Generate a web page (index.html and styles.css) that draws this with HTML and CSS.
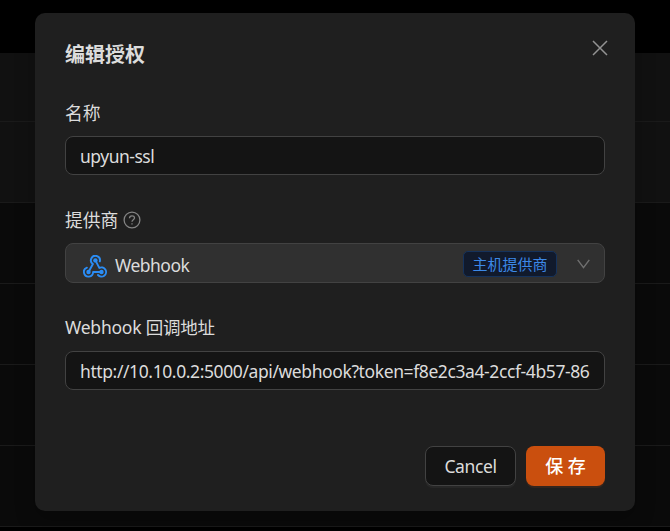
FILE: index.html
```html
<!DOCTYPE html>
<html lang="zh-CN">
<head>
<meta charset="utf-8">
<title>编辑授权</title>
<link rel="stylesheet" href="styles.css">
</head>
<body>
<div class="rows">
  <div class="row head"></div>
  <div class="row lit"></div>
  <div class="row"></div>
  <div class="row"></div>
  <div class="row"></div>
  <div class="row"></div>
</div>
<main class="modal">
  <header class="modal-header">
    <h1 class="title">编辑授权</h1>
    <svg class="close" viewBox="0 0 16 16"><path d="M1 1 15 15M15 1 1 15"/></svg>
  </header>
  <section class="field">
    <div class="label"><span class="cjk">名称</span></div>
    <div class="input"><span class="name">upyun-ssl</span></div>
  </section>
  <section class="field provider-field">
    <div class="label"><span class="cjk">提供商</span>
      <svg class="help" viewBox="0 0 18 18"><circle cx="9" cy="9" r="7.9"/><path d="M6.5 7.2C6.5 4 11.5 4 11.5 7.1 11.5 8.8 9 8.8 9 10.8M9 12.2V13.4"/></svg>
    </div>
    <div class="input select">
      <svg class="hook" viewBox="0 0 24 23">
        <path class="hook-line" d="M16.8 6.4A4.5 4.5 0 1 0 9.9 9L5.5 17M12.4 5.4 16.3 12.9A4.6 4.6 0 1 1 15 20M18.5 17H10.1A4.6 4.6 0 1 1 3.9 12.7"/>
        <g class="hook-dot"><circle cx="12.4" cy="5.4" r="2.2"/><circle cx="5.5" cy="17" r="2.2"/><circle cx="18.5" cy="17" r="2.2"/></g>
      </svg>
      <span class="provider">Webhook</span>
      <span class="tag">主机提供商</span>
      <svg class="arrow" viewBox="0 0 13 10"><path d="M.7.8 6.5 8.6 12.3.8"/></svg>
    </div>
  </section>
  <section class="field">
    <div class="label"><span class="hook-label">Webhook 回调地址</span></div>
    <div class="input"><span class="url">http://10.10.0.2:5000/api/webhook?token=f8e2c3a4-2ccf-4b57-86</span></div>
  </section>
  <footer class="actions">
    <button class="btn cancel">Cancel</button>
    <button class="btn save">保 存</button>
  </footer>
</main>
</body>
</html>
```
FILE: styles.css
```css
* { box-sizing: border-box; }
body {
  margin: 0;
  height: 531px;
  overflow: hidden;
  background: #000;
  color: #dcdcdc;
  font: 17.5px/28px "Noto Sans", "Noto Sans CJK SC", sans-serif;
}
svg { display: block; fill: none; flex: none; }
.rows { padding-top: 53px; }
.row { height: 81px; background: #0a0a0a; border-bottom: 1px solid #1a1a1a; }
.row.head { height: 69px; background: #111; }
.row.lit { background: #111; }
.modal {
  position: absolute;
  left: 35px;
  top: 13px;
  width: 600px;
  height: 498px;
  padding: 25px 30px;
  display: flex;
  flex-direction: column;
  border-radius: 10px;
  background: #1f1f1f;
  box-shadow: 0 8px 20px rgba(0, 0, 0, .25);
}
.modal-header { display: flex; justify-content: space-between; height: 60px; }
.title { margin: 0; padding-top: 1px; font: 700 20px/30px "Noto Sans CJK SC", sans-serif; }
.close { width: 16px; height: 16px; margin: 2px -3px 0 0; stroke: #929292; stroke-width: 1.5; }
.field { height: 107px; }
.provider-field { height: 108px; }
.label { display: flex; align-items: center; gap: 5px; height: 28px; margin-bottom: 10px; white-space: nowrap; }
.cjk { padding-top: 2px; font-size: 17.8px; }
.hook-label { letter-spacing: -.22px; }
.help { width: 18px; height: 18px; margin-top: 2px; stroke: #858585; stroke-width: 1.3; }
.input {
  display: flex;
  align-items: center;
  height: 39px;
  padding: 0 14px;
  border: 1px solid #424242;
  border-radius: 8px;
  background: #141414;
  white-space: nowrap;
}
.name { letter-spacing: -.5px; }
.url { letter-spacing: -.4px; }
.provider { letter-spacing: -.5px; padding-top: 2px; }
.select { height: 40px; padding: 1px 14px 0 17px; background: #303030; }
.hook { width: 24px; height: 23px; margin: 5px 8px 0 0; }
.hook-line { stroke: #2b8df5; stroke-width: 1.9; stroke-linecap: round; stroke-linejoin: round; }
.hook-dot { fill: #2b8df5; }
.tag {
  width: 94px;
  height: 26px;
  margin: 1px 20px 0 auto;
  border: 1px solid #15325b;
  border-radius: 5px;
  background: #111a2c;
  color: #3c89e8;
  font-size: 15px;
  line-height: 25px;
  text-align: center;
}
.arrow { width: 13px; height: 10px; stroke: #707070; stroke-width: 1.4; }
.actions { display: flex; justify-content: flex-end; gap: 10px; margin-top: 26px; }
.btn {
  height: 40px;
  padding: 0;
  border: 1px solid #424242;
  border-radius: 8px;
  background: #141414;
  color: #dcdcdc;
  font: inherit;
  box-shadow: 0 2px 0 rgba(255, 255, 255, .04);
}
.cancel { width: 91px; letter-spacing: -.4px; }
.save { width: 79px; border: 0; background: #ca4f0e; color: #fff; font-size: 18px; font-weight: 500; box-shadow: 0 2px 0 rgba(202, 79, 14, .12); }
```
